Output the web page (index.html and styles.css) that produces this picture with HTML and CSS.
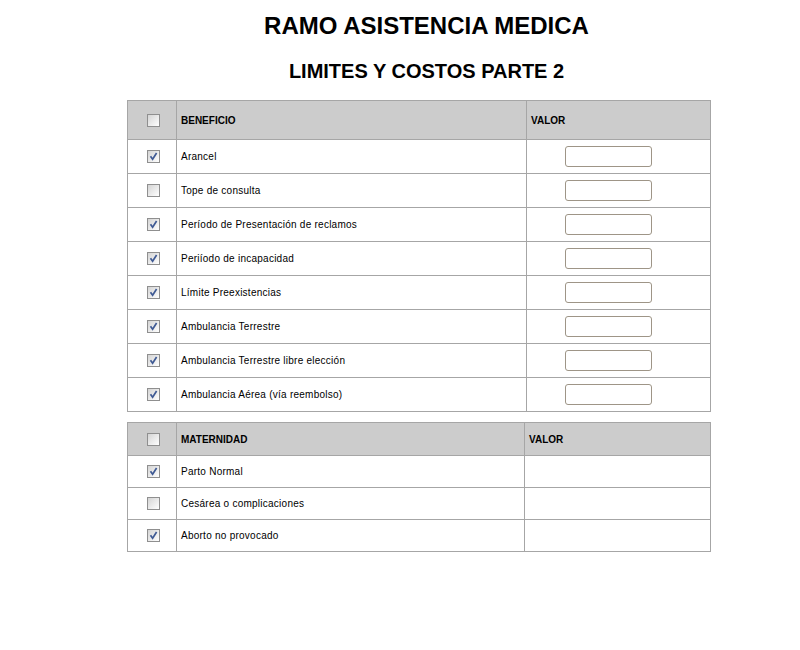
FILE: index.html
```html
<!DOCTYPE html>
<html lang="es">
<head>
<meta charset="utf-8">
<title>Ramo Asistencia Medica</title>
<link rel="stylesheet" href="styles.css">
</head>
<body>
<div class="page">
  <h1 class="title">RAMO ASISTENCIA MEDICA</h1>
  <h2 class="subtitle">LIMITES Y COSTOS PARTE 2</h2>

  <table class="grid grid-main">
    <colgroup><col class="c-chk"><col class="c-name"><col class="c-val"></colgroup>
    <thead>
      <tr class="head-row">
        <th class="chk"><span class="cb"></span></th>
        <th class="name">BENEFICIO</th>
        <th class="val">VALOR</th>
      </tr>
    </thead>
    <tbody>
      <tr><td class="chk"><span class="cb on"><svg viewBox="0 0 13 13" width="13" height="13"><path d="M3.5 6.2 L5.6 9.2 L9.6 3" /></svg></span></td><td class="name">Arancel</td><td class="val"><span class="field"></span></td></tr>
      <tr><td class="chk"><span class="cb"></span></td><td class="name">Tope de consulta</td><td class="val"><span class="field"></span></td></tr>
      <tr><td class="chk"><span class="cb on"><svg viewBox="0 0 13 13" width="13" height="13"><path d="M3.5 6.2 L5.6 9.2 L9.6 3" /></svg></span></td><td class="name">Período de Presentación de reclamos</td><td class="val"><span class="field"></span></td></tr>
      <tr><td class="chk"><span class="cb on"><svg viewBox="0 0 13 13" width="13" height="13"><path d="M3.5 6.2 L5.6 9.2 L9.6 3" /></svg></span></td><td class="name">Periíodo de incapacidad</td><td class="val"><span class="field"></span></td></tr>
      <tr><td class="chk"><span class="cb on"><svg viewBox="0 0 13 13" width="13" height="13"><path d="M3.5 6.2 L5.6 9.2 L9.6 3" /></svg></span></td><td class="name">Límite Preexistencias</td><td class="val"><span class="field"></span></td></tr>
      <tr><td class="chk"><span class="cb on"><svg viewBox="0 0 13 13" width="13" height="13"><path d="M3.5 6.2 L5.6 9.2 L9.6 3" /></svg></span></td><td class="name">Ambulancia Terrestre</td><td class="val"><span class="field"></span></td></tr>
      <tr><td class="chk"><span class="cb on"><svg viewBox="0 0 13 13" width="13" height="13"><path d="M3.5 6.2 L5.6 9.2 L9.6 3" /></svg></span></td><td class="name">Ambulancia Terrestre libre elección</td><td class="val"><span class="field"></span></td></tr>
      <tr><td class="chk"><span class="cb on"><svg viewBox="0 0 13 13" width="13" height="13"><path d="M3.5 6.2 L5.6 9.2 L9.6 3" /></svg></span></td><td class="name">Ambulancia Aérea (vía reembolso)</td><td class="val"><span class="field"></span></td></tr>
    </tbody>
  </table>

  <table class="grid grid-mat">
    <colgroup><col class="c-chk"><col class="c-name2"><col class="c-val2"></colgroup>
    <thead>
      <tr class="head-row">
        <th class="chk"><span class="cb"></span></th>
        <th class="name">MATERNIDAD</th>
        <th class="val">VALOR</th>
      </tr>
    </thead>
    <tbody>
      <tr><td class="chk"><span class="cb on"><svg viewBox="0 0 13 13" width="13" height="13"><path d="M3.5 6.2 L5.6 9.2 L9.6 3" /></svg></span></td><td class="name">Parto Normal</td><td class="val"></td></tr>
      <tr><td class="chk"><span class="cb"></span></td><td class="name">Cesárea o complicaciones</td><td class="val"></td></tr>
      <tr><td class="chk"><span class="cb on"><svg viewBox="0 0 13 13" width="13" height="13"><path d="M3.5 6.2 L5.6 9.2 L9.6 3" /></svg></span></td><td class="name">Aborto no provocado</td><td class="val"></td></tr>
    </tbody>
  </table>
</div>
</body>
</html>
```
FILE: styles.css
```css
html, body {
  margin: 0;
  padding: 0;
  background: #ffffff;
}

body {
  font-family: "Liberation Sans", Arial, sans-serif;
  color: #000;
}

.page {
  width: 583px;
  margin-left: 127px;
  padding-top: 12px;
}

.title {
  margin: 0;
  padding-left: 16px;
  font-size: 24px;
  line-height: 28px;
  font-weight: bold;
  text-align: center;
}

.subtitle {
  margin: 20px 0 0;
  padding-left: 16px;
  font-size: 20px;
  line-height: 23px;
  font-weight: bold;
  text-align: center;
}

.grid {
  width: 583px;
  border-collapse: collapse;
  table-layout: fixed;
  font-size: 10px;
  letter-spacing: 0.25px;
}

.grid-main {
  margin-top: 17px;
}

.grid-mat {
  margin-top: 10px;
}

.c-chk { width: 49px; }
.c-name { width: 350px; }
.c-val { width: 184px; }
.c-name2 { width: 348px; }
.c-val2 { width: 186px; }

.grid th,
.grid td {
  border: 1px solid #a6a6a6;
  padding: 0 0 0 4px;
  vertical-align: middle;
  text-align: left;
}

.grid th {
  background: #cccccc;
  font-weight: bold;
  letter-spacing: 0;
}

.grid-main tbody tr { height: 34px; }
.grid-main .head-row { height: 39px; }
.grid-mat .head-row { height: 33px; }
.grid-mat tbody tr { height: 32px; }

.grid .chk {
  padding: 0 0 0 19px;
  line-height: 0;
}

.cb {
  display: inline-block;
  width: 11px;
  height: 11px;
  border: 1px solid #8f8f8f;
  background: linear-gradient(135deg, #d4d4d4 0%, #f2f2f2 70%, #ffffff 100%);
  position: relative;
  vertical-align: middle;
}

.cb svg {
  position: absolute;
  left: -1px;
  top: -1px;
}

.cb svg path {
  fill: none;
  stroke: #3f5a94;
  stroke-width: 1.7;
}

.grid td.val .field {
  display: block;
  margin-left: 34px;
  width: 85px;
  height: 19px;
  border: 1px solid #9e9587;
  border-radius: 3px;
  background: #fff;
}
```
